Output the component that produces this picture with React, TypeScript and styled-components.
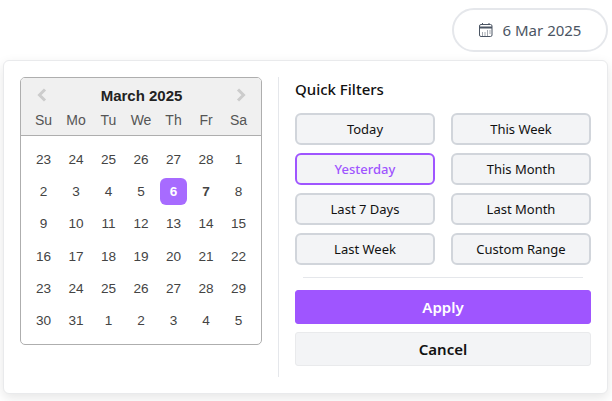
import styled, { createGlobalStyle } from "styled-components";

const GlobalStyle = createGlobalStyle`
    html, body {
        margin: 0;
        padding: 0;
        background: #fff;
    }
`;

const Page = styled.div`
    width: 612px;
    height: 401px;
    box-sizing: border-box;
    padding: 8px 4px 0 3px;
    overflow: hidden;
    display: flex;
    flex-direction: column;
    align-items: flex-end;
    gap: 8px;
    font-family: "Noto Sans", sans-serif;
`;

const DatePill = styled.button`
    width: 156px;
    height: 44px;
    box-sizing: border-box;
    display: flex;
    align-items: center;
    justify-content: center;
    gap: 9px;
    padding: 0 1px 0 0;
    background: #fff;
    border: 2px solid #e5e7eb;
    border-radius: 22px;
    color: #4b5563;
    font-family: inherit;
    font-size: 15px;
`;

const Card = styled.div`
    width: 605px;
    height: 334px;
    box-sizing: border-box;
    display: flex;
    padding: 16px;
    background: #fff;
    border: 1px solid #e9eaec;
    border-radius: 6px;
    box-shadow: 0 4px 12px rgba(0, 0, 0, 0.1);
`;

const LeftColumn = styled.div`
    width: 259px;
    box-sizing: border-box;
    padding-right: 16px;
    border-right: 1px solid #e5e7eb;
`;

const Calendar = styled.div`
    width: 242px;
    height: 268px;
    box-sizing: border-box;
    background: #fff;
    border: 1px solid #aeaeae;
    border-radius: 5px;
    overflow: hidden;
    font-family: "Liberation Sans", Arial, sans-serif;
`;

const CalendarHeader = styled.div`
    height: 58px;
    box-sizing: border-box;
    background: #f0f0f0;
    border-bottom: 1px solid #aeaeae;
    padding-top: 8px;
`;

const MonthRow = styled.div`
    height: 18px;
    display: flex;
    align-items: center;
    justify-content: space-between;
    padding: 0 15px 0 16px;
`;

const MonthTitle = styled.div`
    color: #222;
    font-size: 15px;
    font-weight: 700;
`;

const Grid = styled.div`
    display: grid;
    grid-template-columns: repeat(7, 32.5px);
    justify-content: center;
`;

const DayNames = styled(Grid)`
    margin-top: 6px;
`;

const DayName = styled.div`
    text-align: center;
    color: #555;
    font-size: 14px;
    line-height: 20px;
`;

const Days = styled(Grid)`
    margin-top: 7px;
    grid-auto-rows: 32.3px;
`;

const Day = styled.div<{ $selected?: boolean; $today?: boolean }>`
    width: 27px;
    height: 27px;
    justify-self: center;
    align-self: center;
    display: flex;
    align-items: center;
    justify-content: center;
    border-radius: 6px;
    font-size: 13.6px;
    font-weight: ${props => (props.$selected || props.$today ? 700 : 400)};
    color: ${props => (props.$selected ? "#fff" : "#444")};
    background: ${props => (props.$selected ? "#a76bff" : "transparent")};
`;

const RightColumn = styled.div`
    flex: 1;
    padding-left: 16px;
    display: flex;
    flex-direction: column;
`;

const FiltersTitle = styled.div`
    height: 24px;
    line-height: 24px;
    color: #111;
    font-size: 15px;
    font-weight: 500;
`;

const FilterGrid = styled.div`
    margin-top: 12px;
    display: grid;
    grid-template-columns: 140px 140px;
    grid-auto-rows: 32px;
    gap: 8px 16px;
`;

const FilterButton = styled.button<{ $active?: boolean }>`
    padding: 0;
    box-sizing: border-box;
    background: #f3f4f6;
    border: 2px solid ${props => (props.$active ? "#9f55ff" : "#d1d5db")};
    border-radius: 6px;
    color: ${props => (props.$active ? "#9f55ff" : "#111")};
    font-family: inherit;
    font-size: 13px;
    font-weight: ${props => (props.$active ? 500 : 400)};
`;

const Separator = styled.div`
    height: 1px;
    margin: 12px 8px 12px;
    background: #e5e7eb;
`;

const ActionButton = styled.button<{ $primary?: boolean }>`
    width: 296px;
    height: 33.5px;
    padding: 0;
    box-sizing: border-box;
    border: 1px solid ${props => (props.$primary ? "#9f55ff" : "#e9eaec")};
    border-radius: 3px;
    background: ${props => (props.$primary ? "#9f55ff" : "#f3f4f6")};
    color: ${props => (props.$primary ? "#fff" : "#111")};
    font-family: inherit;
    font-size: 15px;
    font-weight: 600;
    & + & {
        margin-top: 8.5px;
    }
`;

const dayNames = ["Su", "Mo", "Tu", "We", "Th", "Fr", "Sa"];

const days = [
    23, 24, 25, 26, 27, 28, 1,
    2, 3, 4, 5, 6, 7, 8,
    9, 10, 11, 12, 13, 14, 15,
    16, 17, 18, 19, 20, 21, 22,
    23, 24, 25, 26, 27, 28, 29,
    30, 31, 1, 2, 3, 4, 5,
];

const filters = [
    "Today", "This Week",
    "Yesterday", "This Month",
    "Last 7 Days", "Last Month",
    "Last Week", "Custom Range",
];

function CalendarIcon() {
    return (
        <svg width="16" height="16" viewBox="0 0 16 16" fill="none">
            <rect x="1.5" y="2.5" width="12.5" height="12" rx="1.5" stroke="#4b5563" />
            <path d="M1.5 5.5h12.5" stroke="#4b5563" strokeWidth="2" />
            <path d="M4.5 1v2M11 1v2" stroke="#4b5563" />
            <path d="M4 11h1M4 13h1M6.5 11h1M6.5 13h1M9 9h1M9 11h1M9 13h1M11.5 9h1M11.5 11h1" stroke="#4b5563" />
        </svg>
    );
}

function Chevron({ right }: { right?: boolean }) {
    return (
        <svg width="10" height="14" viewBox="0 0 10 14" fill="none">
            <path
                d={right ? "M2 1.5 7.5 7 2 12.5" : "M8 1.5 2.5 7 8 12.5"}
                stroke="#ccc"
                strokeWidth="3"
            />
        </svg>
    );
}

function App() {
    return (
        <Page>
            <GlobalStyle />
            <DatePill>
                <CalendarIcon />
                6 Mar 2025
            </DatePill>
            <Card>
                <LeftColumn>
                    <Calendar>
                        <CalendarHeader>
                            <MonthRow>
                                <Chevron />
                                <MonthTitle>March 2025</MonthTitle>
                                <Chevron right />
                            </MonthRow>
                            <DayNames>
                                {dayNames.map(name => <DayName key={name}>{name}</DayName>)}
                            </DayNames>
                        </CalendarHeader>
                        <Days>
                            {days.map((day, i) => (
                                <Day key={i} $selected={i === 11} $today={i === 12}>{day}</Day>
                            ))}
                        </Days>
                    </Calendar>
                </LeftColumn>
                <RightColumn>
                    <FiltersTitle>Quick Filters</FiltersTitle>
                    <FilterGrid>
                        {filters.map(filter => (
                            <FilterButton key={filter} $active={filter === "Yesterday"}>{filter}</FilterButton>
                        ))}
                    </FilterGrid>
                    <Separator />
                    <ActionButton $primary>Apply</ActionButton>
                    <ActionButton>Cancel</ActionButton>
                </RightColumn>
            </Card>
        </Page>
    );
}

export default App;
